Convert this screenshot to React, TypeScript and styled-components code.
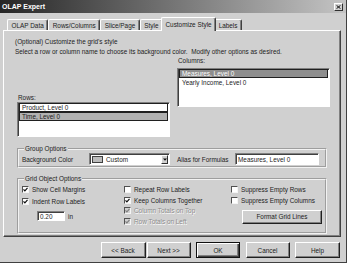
import React from "react";
import styled, { createGlobalStyle } from "styled-components";

const GlobalStyle = createGlobalStyle`
  html, body {
    margin: 0;
    padding: 0;
    background: #d0d0d0;
  }
  body {
    font-family: "Liberation Sans", Arial, sans-serif;
    font-size: 6.4px;
    color: #1c1c1c;
  }
  * {
    box-sizing: border-box;
  }
`;

const Window = styled.div`
  width: 347px;
  height: 263px;
  background: #d0d0d0;
  border-right: 1px solid #404040;
  border-bottom: 1px solid #404040;
  display: flex;
  flex-direction: column;
  overflow: hidden;
`;

const TitleBar = styled.div`
  height: 13px;
  flex-shrink: 0;
  display: flex;
  align-items: center;
  justify-content: space-between;
  padding: 0 3px 0 2px;
  background: linear-gradient(to right, #262626, #c4c4c4);
  color: #fff;
  font-weight: bold;
  font-size: 7px;
`;

const CloseButton = styled.div`
  width: 9px;
  height: 8px;
  background: #d0d0d0;
  border: 1px solid;
  border-color: #fff #303030 #303030 #fff;
  display: flex;
  align-items: center;
  justify-content: center;
`;

const Body = styled.div`
  flex: 1;
  display: flex;
  flex-direction: column;
  padding: 4px 5px 0 3px;
`;

const TabStrip = styled.div`
  display: flex;
  align-items: flex-end;
  height: 14px;
  padding-left: 4px;
  margin-bottom: -1px;
  position: relative;
  z-index: 1;
`;

const Tab = styled.div<{ $active?: boolean }>`
  height: ${({ $active }) => ($active ? "14px" : "11px")};
  margin: ${({ $active }) => ($active ? "0 -2px" : "0 0 1px 0")};
  padding: 0 3.5px;
  display: flex;
  align-items: center;
  background: #d0d0d0;
  border-top: 1px solid #fff;
  border-left: 1px solid #fff;
  border-right: 1px solid #404040;
  box-shadow: inset -1px 0 #808080;
  border-radius: 2px 2px 0 0;
  white-space: nowrap;
  position: relative;
  z-index: ${({ $active }) => ($active ? 2 : 1)};
`;

const Panel = styled.div`
  height: 207px;
  flex-shrink: 0;
  border: 1px solid;
  border-color: #fff #404040 #404040 #fff;
  box-shadow: inset -1px -1px #808080;
  padding: 6px 10px 0 11px;
  display: flex;
  flex-direction: column;
`;

const Intro = styled.div`
  line-height: 9.5px;
  white-space: nowrap;
`;

const ListsRow = styled.div`
  display: flex;
  gap: 7px;
  margin-left: 2px;
`;

const ListColumn = styled.div<{ $offset: number }>`
  width: 153px;
  margin-top: ${({ $offset }) => $offset}px;
  display: flex;
  flex-direction: column;
`;

const FieldLabel = styled.div`
  line-height: 9px;
  padding-left: 1px;
`;

const ListBox = styled.div<{ $height: number; $gap: number }>`
  height: ${({ $height }) => $height}px;
  margin-top: ${({ $gap }) => $gap}px;
  background: #fff;
  border: 1px solid;
  border-color: #808080 #fff #fff #808080;
  box-shadow: inset 1px 1px #404040;
  padding: 0 1px 0 1px;
  display: flex;
  flex-direction: column;
`;

const ListItem = styled.div<{ $state?: "selected" | "focus" | "inactive" }>`
  height: 9px;
  line-height: 7px;
  padding-left: 2px;
  white-space: nowrap;
  border: 1px solid
    ${({ $state }) => ($state ? "#202020" : "transparent")};
  background: ${({ $state }) =>
    $state === "selected" ? "#8e8e8e" : $state === "inactive" ? "#b2b2b2" : "transparent"};
  color: ${({ $state }) => ($state === "selected" ? "#fff" : "#1c1c1c")};
`;

const GroupBox = styled.fieldset<{ $top: number }>`
  margin: ${({ $top }) => $top}px 3px 0 2px;
  padding: 0 3px 1px 3px;
  border: 2px groove #f2f2f2;
  min-width: 0;
`;

const GroupLegend = styled.legend`
  padding: 0 1px;
  margin-left: 2px;
  line-height: 8px;
  font-size: 6.4px;
`;

const OptionsRow = styled.div`
  display: flex;
  align-items: center;
  height: 12px;
`;

const InlineLabel = styled.div<{ $width: number; $lead?: number }>`
  width: ${({ $width }) => $width}px;
  margin-left: ${({ $lead }) => $lead ?? 0}px;
  white-space: nowrap;
`;

const Sunken = styled.div<{ $width: number; $height: number }>`
  width: ${({ $width }) => $width}px;
  height: ${({ $height }) => $height}px;
  background: #fff;
  border: 1px solid;
  border-color: #808080 #fff #fff #808080;
  box-shadow: inset 1px 1px #404040;
  display: flex;
  align-items: center;
  padding: 1px 1px 0 2px;
  white-space: nowrap;
`;

const Swatch = styled.span`
  width: 11px;
  height: 7px;
  border: 1px solid #404040;
  background: #bcbcbc;
  margin-right: 3px;
`;

const DropButton = styled.span`
  margin-left: auto;
  width: 7px;
  height: 9px;
  background: #d0d0d0;
  border: 1px solid;
  border-color: #fff #303030 #303030 #fff;
  display: flex;
  align-items: center;
  justify-content: center;
`;

const GridOptions = styled.div`
  display: grid;
  grid-template-columns: 102px 107px 1fr;
  padding: 2px 0 5px 0;
`;

const OptionColumn = styled.div<{ $gap: number }>`
  display: flex;
  flex-direction: column;
  gap: ${({ $gap }) => $gap}px;
`;

const CheckRow = styled.div<{ $disabled?: boolean }>`
  height: 9px;
  display: flex;
  align-items: center;
  gap: 3px;
  white-space: nowrap;
  color: ${({ $disabled }) => ($disabled ? "#8c8c8c" : "#1c1c1c")};
  text-shadow: ${({ $disabled }) => ($disabled ? "0.6px 0.6px 0 #fff" : "none")};
`;

const CheckBox = styled.span<{ $disabled?: boolean }>`
  width: 7px;
  height: 7px;
  flex-shrink: 0;
  background: ${({ $disabled }) => ($disabled ? "#d0d0d0" : "#fff")};
  border: 1px solid;
  border-color: #505050 #f4f4f4 #f4f4f4 #505050;
  display: flex;
  align-items: center;
  justify-content: center;
`;

const UnitRow = styled.div`
  display: flex;
  align-items: center;
  gap: 3px;
  margin: 2px 0 0 15px;
`;

const PushButton = styled.div<{ $width: number; $default?: boolean }>`
  width: ${({ $width }) => $width}px;
  height: 100%;
  display: flex;
  align-items: center;
  justify-content: center;
  background: #d0d0d0;
  white-space: nowrap;
  border: 1px solid;
  border-color: ${({ $default }) =>
    $default ? "#101010" : "#fff #202020 #202020 #fff"};
  box-shadow: ${({ $default }) =>
    $default
      ? "inset 1px 1px #fff, inset -1px -1px #404040, inset -2px -2px #808080"
      : "inset -1px -1px #808080"};
`;

const SideButtonSlot = styled.div`
  height: 14px;
  margin: 3.5px 0 0 11px;
  display: flex;
`;

const ButtonRow = styled.div`
  height: 16px;
  margin-top: 5px;
  padding-right: 1px;
  display: flex;
  justify-content: flex-end;
  gap: 5.5px;
`;

const ButtonPair = styled.div`
  display: flex;
  gap: 1px;
`;

const Check = ({ color = "#101010" }: { color?: string }) => (
  <svg width="5" height="5" viewBox="0 0 5 5">
    <path d="M0.5 2.4 L1.9 3.9 L4.5 0.9" fill="none" stroke={color} strokeWidth="1.2" />
  </svg>
);

const Option = ({
  label,
  checked,
  disabled,
}: {
  label: string;
  checked?: boolean;
  disabled?: boolean;
}) => (
  <CheckRow $disabled={disabled}>
    <CheckBox $disabled={disabled}>
      {checked && <Check color={disabled ? "#808080" : "#101010"} />}
    </CheckBox>
    {label}
  </CheckRow>
);

const tabs = ["OLAP Data", "Rows/Columns", "Slice/Page", "Style", "Customize Style", "Labels"];

export default function App() {
  return (
    <>
      <GlobalStyle />
      <Window>
        <TitleBar>
          <span>OLAP Expert</span>
          <CloseButton>
            <svg width="5" height="4" viewBox="0 0 5 4">
              <path d="M0.5 0.3 L4.5 3.7 M4.5 0.3 L0.5 3.7" stroke="#101010" strokeWidth="1" />
            </svg>
          </CloseButton>
        </TitleBar>
        <Body>
          <TabStrip>
            {tabs.map((t) => (
              <Tab key={t} $active={t === "Customize Style"}>
                {t}
              </Tab>
            ))}
          </TabStrip>
          <Panel>
            <Intro>
              (Optional) Customize the grid's style
              <br />
              Select a row or column name to choose its background color.&nbsp; Modify other
              options as desired.
            </Intro>
            <ListsRow>
              <ListColumn $offset={37}>
                <FieldLabel>Rows:</FieldLabel>
                <ListBox $height={35} $gap={0}>
                  <ListItem $state="focus">Product, Level 0</ListItem>
                  <ListItem $state="inactive">Time, Level 0</ListItem>
                </ListBox>
              </ListColumn>
              <ListColumn $offset={0}>
                <FieldLabel>Columns:</FieldLabel>
                <ListBox $height={39} $gap={3}>
                  <ListItem $state="selected">Measures, Level 0</ListItem>
                  <ListItem>Yearly Income, Level 0</ListItem>
                </ListBox>
              </ListColumn>
            </ListsRow>

            <GroupBox $top={8}>
              <GroupLegend>Group Options</GroupLegend>
              <OptionsRow>
                <InlineLabel $width={67}>Background Color</InlineLabel>
                <Sunken $width={81} $height={12}>
                  <Swatch />
                  Custom
                  <DropButton>
                    <svg width="4" height="3" viewBox="0 0 4 3">
                      <path d="M0 0.5 H4 L2 2.8 Z" fill="#101010" />
                    </svg>
                  </DropButton>
                </Sunken>
                <InlineLabel $width={58} $lead={7}>
                  Alias for Formulas
                </InlineLabel>
                <Sunken $width={84} $height={12}>
                  Measures, Level 0
                </Sunken>
              </OptionsRow>
            </GroupBox>

            <GroupBox $top={7}>
              <GroupLegend>Grid Object Options</GroupLegend>
              <GridOptions>
                <OptionColumn $gap={3}>
                  <Option label="Show Cell Margins" checked />
                  <Option label="Indent Row Labels" checked />
                  <UnitRow>
                    <Sunken $width={28} $height={10}>
                      0.20
                    </Sunken>
                    in
                  </UnitRow>
                </OptionColumn>
                <OptionColumn $gap={1.6}>
                  <Option label="Repeat Row Labels" />
                  <Option label="Keep Columns Together" checked />
                  <Option label="Column Totals on Top" checked disabled />
                  <Option label="Row Totals on Left" checked disabled />
                </OptionColumn>
                <OptionColumn $gap={1.6}>
                  <Option label="Suppress Empty Rows" />
                  <Option label="Suppress Empty Columns" />
                  <SideButtonSlot>
                    <PushButton $width={80}>Format Grid Lines</PushButton>
                  </SideButtonSlot>
                </OptionColumn>
              </GridOptions>
            </GroupBox>
          </Panel>
          <ButtonRow>
            <ButtonPair>
              <PushButton $width={45}>&lt;&lt; Back</PushButton>
              <PushButton $width={44}>Next &gt;&gt;</PushButton>
            </ButtonPair>
            <PushButton $width={44} $default>
              OK
            </PushButton>
            <PushButton $width={44}>Cancel</PushButton>
            <PushButton $width={45}>Help</PushButton>
          </ButtonRow>
        </Body>
      </Window>
    </>
  );
}
